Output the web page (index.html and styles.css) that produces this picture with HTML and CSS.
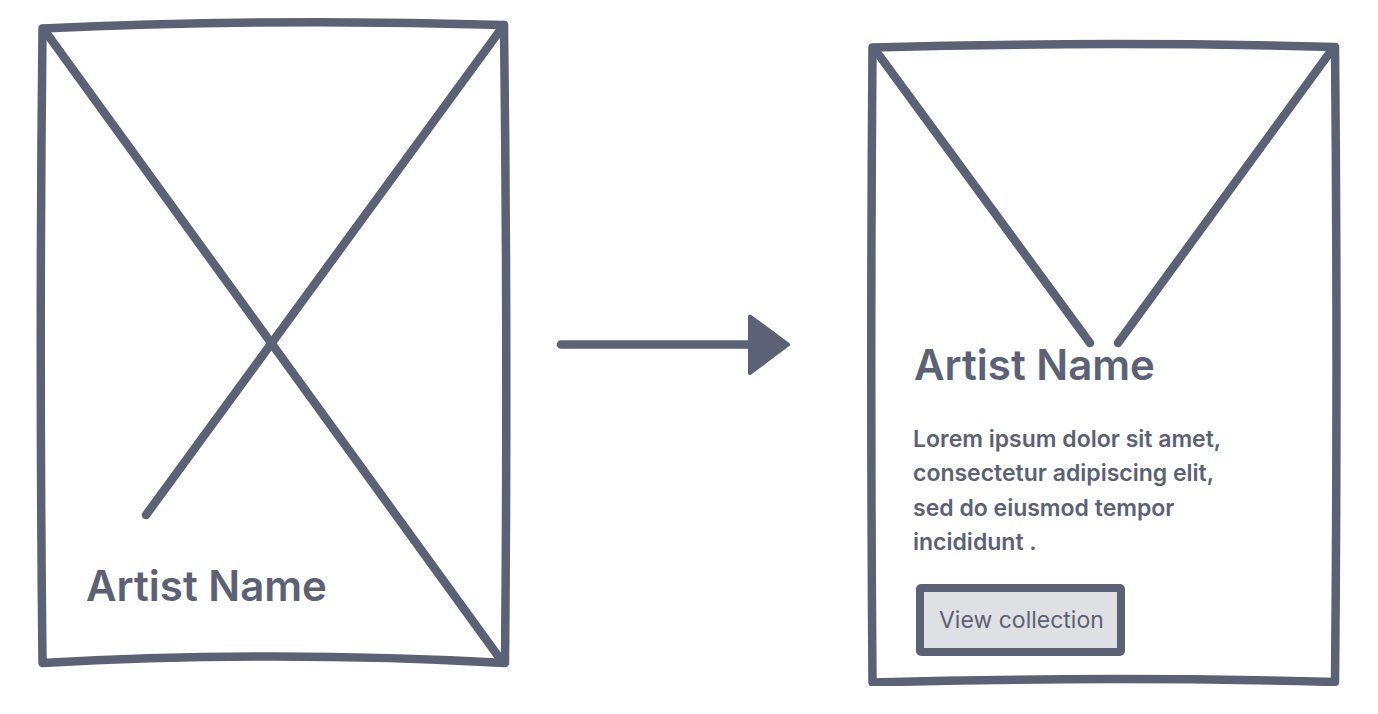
FILE: index.html
```html
<!DOCTYPE html>
<html lang="en">
<head>
<meta charset="utf-8">
<title>Artist card wireframe</title>
<link rel="stylesheet" href="styles.css">
</head>
<body>
<main class="stage">
  <section class="card card-before">
    <svg class="sketch" viewBox="0 0 472 646" aria-hidden="true">
      <path class="frame" d="M4.5,7.5 Q236,-3 466,4 Q470,323 467,642 Q236,629 4.5,642 Q1,325 4.5,7.5 Z"/>
      <path d="M7,10 L463,639"/>
      <path d="M466,4 L108,494"/>
    </svg>
    <h2 class="artist">Artist Name</h2>
  </section>

  <svg class="arrow" viewBox="0 0 245 66" aria-hidden="true">
    <path class="shaft" d="M11,32.5 L204,32.5"/>
    <path class="head" d="M200,4.5 L238,32.5 L200,61 Z"/>
  </svg>

  <section class="card card-after">
    <svg class="sketch" viewBox="0 0 472 646" aria-hidden="true">
      <path class="frame" d="M4.5,7.5 Q236,1 467,7 Q470,324 467,642 Q236,636 4.5,642.5 Q2,325 4.5,7.5 Z"/>
      <path d="M8,11 L222,303"/>
      <path d="M463,11 L250,303"/>
    </svg>
    <h2 class="artist">Artist Name</h2>
    <p class="bio">Lorem ipsum dolor sit amet, consectetur adipiscing elit, sed do eiusmod tempor incididunt .</p>
    <button class="btn" type="button">View collection</button>
  </section>
</main>
</body>
</html>
```

FILE: styles.css
```css
* {
  box-sizing: border-box;
}

html, body {
  margin: 0;
  background: #ffffff;
}

body {
  font-family: "Inter", "Liberation Sans", sans-serif;
  color: #5b6275;
}

.stage {
  display: flex;
  align-items: flex-start;
  padding: 21px 0 0 38px;
}

.card {
  position: relative;
  flex: none;
  width: 472px;
  height: 646px;
  display: flex;
  flex-direction: column;
  align-items: flex-start;
}

.sketch {
  position: absolute;
  left: 0;
  top: 0;
  width: 472px;
  height: 646px;
  overflow: visible;
  pointer-events: none;
}

.sketch path,
.arrow path {
  fill: none;
  stroke: #5b6275;
  stroke-width: 8.5;
  stroke-linecap: round;
  stroke-linejoin: round;
}

.arrow .head {
  fill: #5b6275;
  stroke-width: 4;
}

.artist {
  position: relative;
  margin: 0;
  font-size: 42px;
  line-height: 50px;
  font-weight: 600;
  letter-spacing: 0;
  white-space: nowrap;
}

.card-before {
  padding: 540px 0 0 48px;
}

.arrow {
  flex: none;
  width: 245px;
  height: 66px;
  margin: 291px 0 0 40px;
  overflow: visible;
}

.card-after {
  margin: 19px 0 0 73px;
  padding: 300px 0 0 45px;
}

.card-after .artist {
  margin-left: 1px;
}

.bio {
  position: relative;
  margin: 32px 0 0;
  width: 345px;
  font-size: 23px;
  line-height: 34.3px;
  font-weight: 600;
}

.btn {
  position: relative;
  margin: 25px 0 0 3px;
  height: 72px;
  padding: 0 13px 0 15px;
  border: 8px solid #5b6275;
  border-radius: 5px;
  background: #dfe0e4;
  color: #5b6275;
  font-family: "Inter", "Liberation Sans", sans-serif;
  font-size: 23px;
  font-weight: 400;
}
```
